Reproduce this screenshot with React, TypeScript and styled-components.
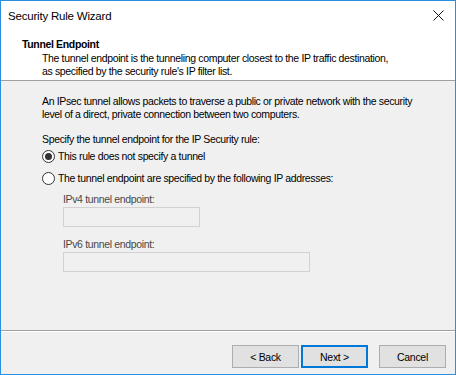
import React, { useState } from 'react'
import styled, { createGlobalStyle } from 'styled-components'

const GlobalStyle = createGlobalStyle`
  html, body {
    margin: 0;
    background: #ffffff;
  }
  * {
    box-sizing: border-box;
  }
`

const Window = styled.div`
  width: 456px;
  height: 375px;
  border: 1px solid #2b8fdf;
  display: flex;
  flex-direction: column;
  background: #f0f0f0;
  font-family: "Liberation Sans", Arial, sans-serif;
  font-size: 10.5px;
  letter-spacing: -0.35px;
  color: #000;
`

const TitleBar = styled.div`
  height: 29px;
  background: #fff;
  display: flex;
  align-items: center;
  justify-content: space-between;
  padding: 0 9px 0 7px;
`

const Title = styled.span`
  font-size: 11.5px;
  letter-spacing: -0.2px;
  color: #000;
`

const CloseButton = styled.button`
  border: 0;
  background: transparent;
  padding: 0;
  width: 16px;
  height: 16px;
  display: flex;
  align-items: center;
  justify-content: center;
`

const Header = styled.div`
  background: #fff;
  padding: 8px 0 0 21px;
  height: 51px;
  border-bottom: 1px solid #a0a0a0;
`

const Heading = styled.div`
  font-weight: bold;
  line-height: 13px;
  margin-bottom: 1px;
`

const Description = styled.div`
  padding-left: 20px;
  line-height: 13px;
`

const Body = styled.div`
  flex: 1;
  padding: 14px 20px 0 41px;
  border-bottom: 1px solid #a0a0a0;
  display: flex;
  flex-direction: column;
`

const Text = styled.p<{ $gap?: number }>`
  margin: ${p => p.$gap ?? 0}px 0 0;
  line-height: 13px;
`

const RadioRow = styled.label<{ $gap: number }>`
  display: flex;
  align-items: center;
  gap: 3px;
  height: 13px;
  margin-top: ${p => p.$gap}px;
  line-height: 13px;
`

const RadioCircle = styled.span<{ $checked: boolean }>`
  width: 13px;
  height: 13px;
  border-radius: 50%;
  border: 1px solid #333;
  background: #fff;
  display: flex;
  align-items: center;
  justify-content: center;
  &::after {
    content: '';
    width: 7px;
    height: 7px;
    border-radius: 50%;
    background: ${p => (p.$checked ? '#333' : 'transparent')};
  }
`

const Fields = styled.div`
  padding-left: 21px;
  display: flex;
  flex-direction: column;
`

const FieldLabel = styled.div<{ $gap: number }>`
  margin-top: ${p => p.$gap}px;
  line-height: 13px;
  color: #474747;
`

const Input = styled.div<{ $width: number }>`
  width: ${p => p.$width}px;
  height: 20px;
  margin-top: 1px;
  border: 1px solid #d2d2d2;
  background: #f0f0f0;
`

const Footer = styled.div`
  height: 43px;
  border-top: 1px solid #fff;
  display: flex;
  justify-content: flex-end;
  align-items: flex-start;
  padding: 13px 9px 0 0;
`

const Button = styled.button<{ $primary?: boolean; $space?: number }>`
  width: 67px;
  height: 23px;
  margin-left: ${p => p.$space ?? 0}px;
  background: #e1e1e1;
  border: 1px solid ${p => (p.$primary ? '#0078d7' : '#adadad')};
  box-shadow: ${p => (p.$primary ? 'inset 0 0 0 1px #0078d7' : 'none')};
  font-family: "Liberation Sans", Arial, sans-serif;
  font-size: 10.5px;
  letter-spacing: -0.3px;
  color: #000;
  padding: 0;
`

export default function App() {
  const [choice, setChoice] = useState(0)

  return (
    <>
      <GlobalStyle />
      <Window>
        <TitleBar>
          <Title>Security Rule Wizard</Title>
          <CloseButton aria-label="Close">
            <svg width="11" height="11" viewBox="0 0 11 11">
              <path d="M0.5 0.5 L10.5 10.5 M10.5 0.5 L0.5 10.5" stroke="#111" strokeWidth="1" />
            </svg>
          </CloseButton>
        </TitleBar>
        <Header>
          <Heading>Tunnel Endpoint</Heading>
          <Description>
            The tunnel endpoint is the tunneling computer closest to the IP traffic destination,
            <br />
            as specified by the security rule's IP filter list.
          </Description>
        </Header>
        <Body>
          <Text>
            An IPsec tunnel allows packets to traverse a public or private network with the security
            <br />
            level of a direct, private connection between two computers.
          </Text>
          <Text $gap={12}>Specify the tunnel endpoint for the IP Security rule:</Text>
          <RadioRow $gap={4} onClick={() => setChoice(0)}>
            <RadioCircle $checked={choice === 0} />
            This rule does not specify a tunnel
          </RadioRow>
          <RadioRow $gap={9} onClick={() => setChoice(1)}>
            <RadioCircle $checked={choice === 1} />
            The tunnel endpoint are specified by the following IP addresses:
          </RadioRow>
          <Fields>
            <FieldLabel $gap={8}>IPv4 tunnel endpoint:</FieldLabel>
            <Input $width={137} />
            <FieldLabel $gap={11}>IPv6 tunnel endpoint:</FieldLabel>
            <Input $width={247} />
          </Fields>
        </Body>
        <Footer>
          <Button>&lt; Back</Button>
          <Button $primary $space={2}>Next &gt;</Button>
          <Button $space={11}>Cancel</Button>
        </Footer>
      </Window>
    </>
  )
}
